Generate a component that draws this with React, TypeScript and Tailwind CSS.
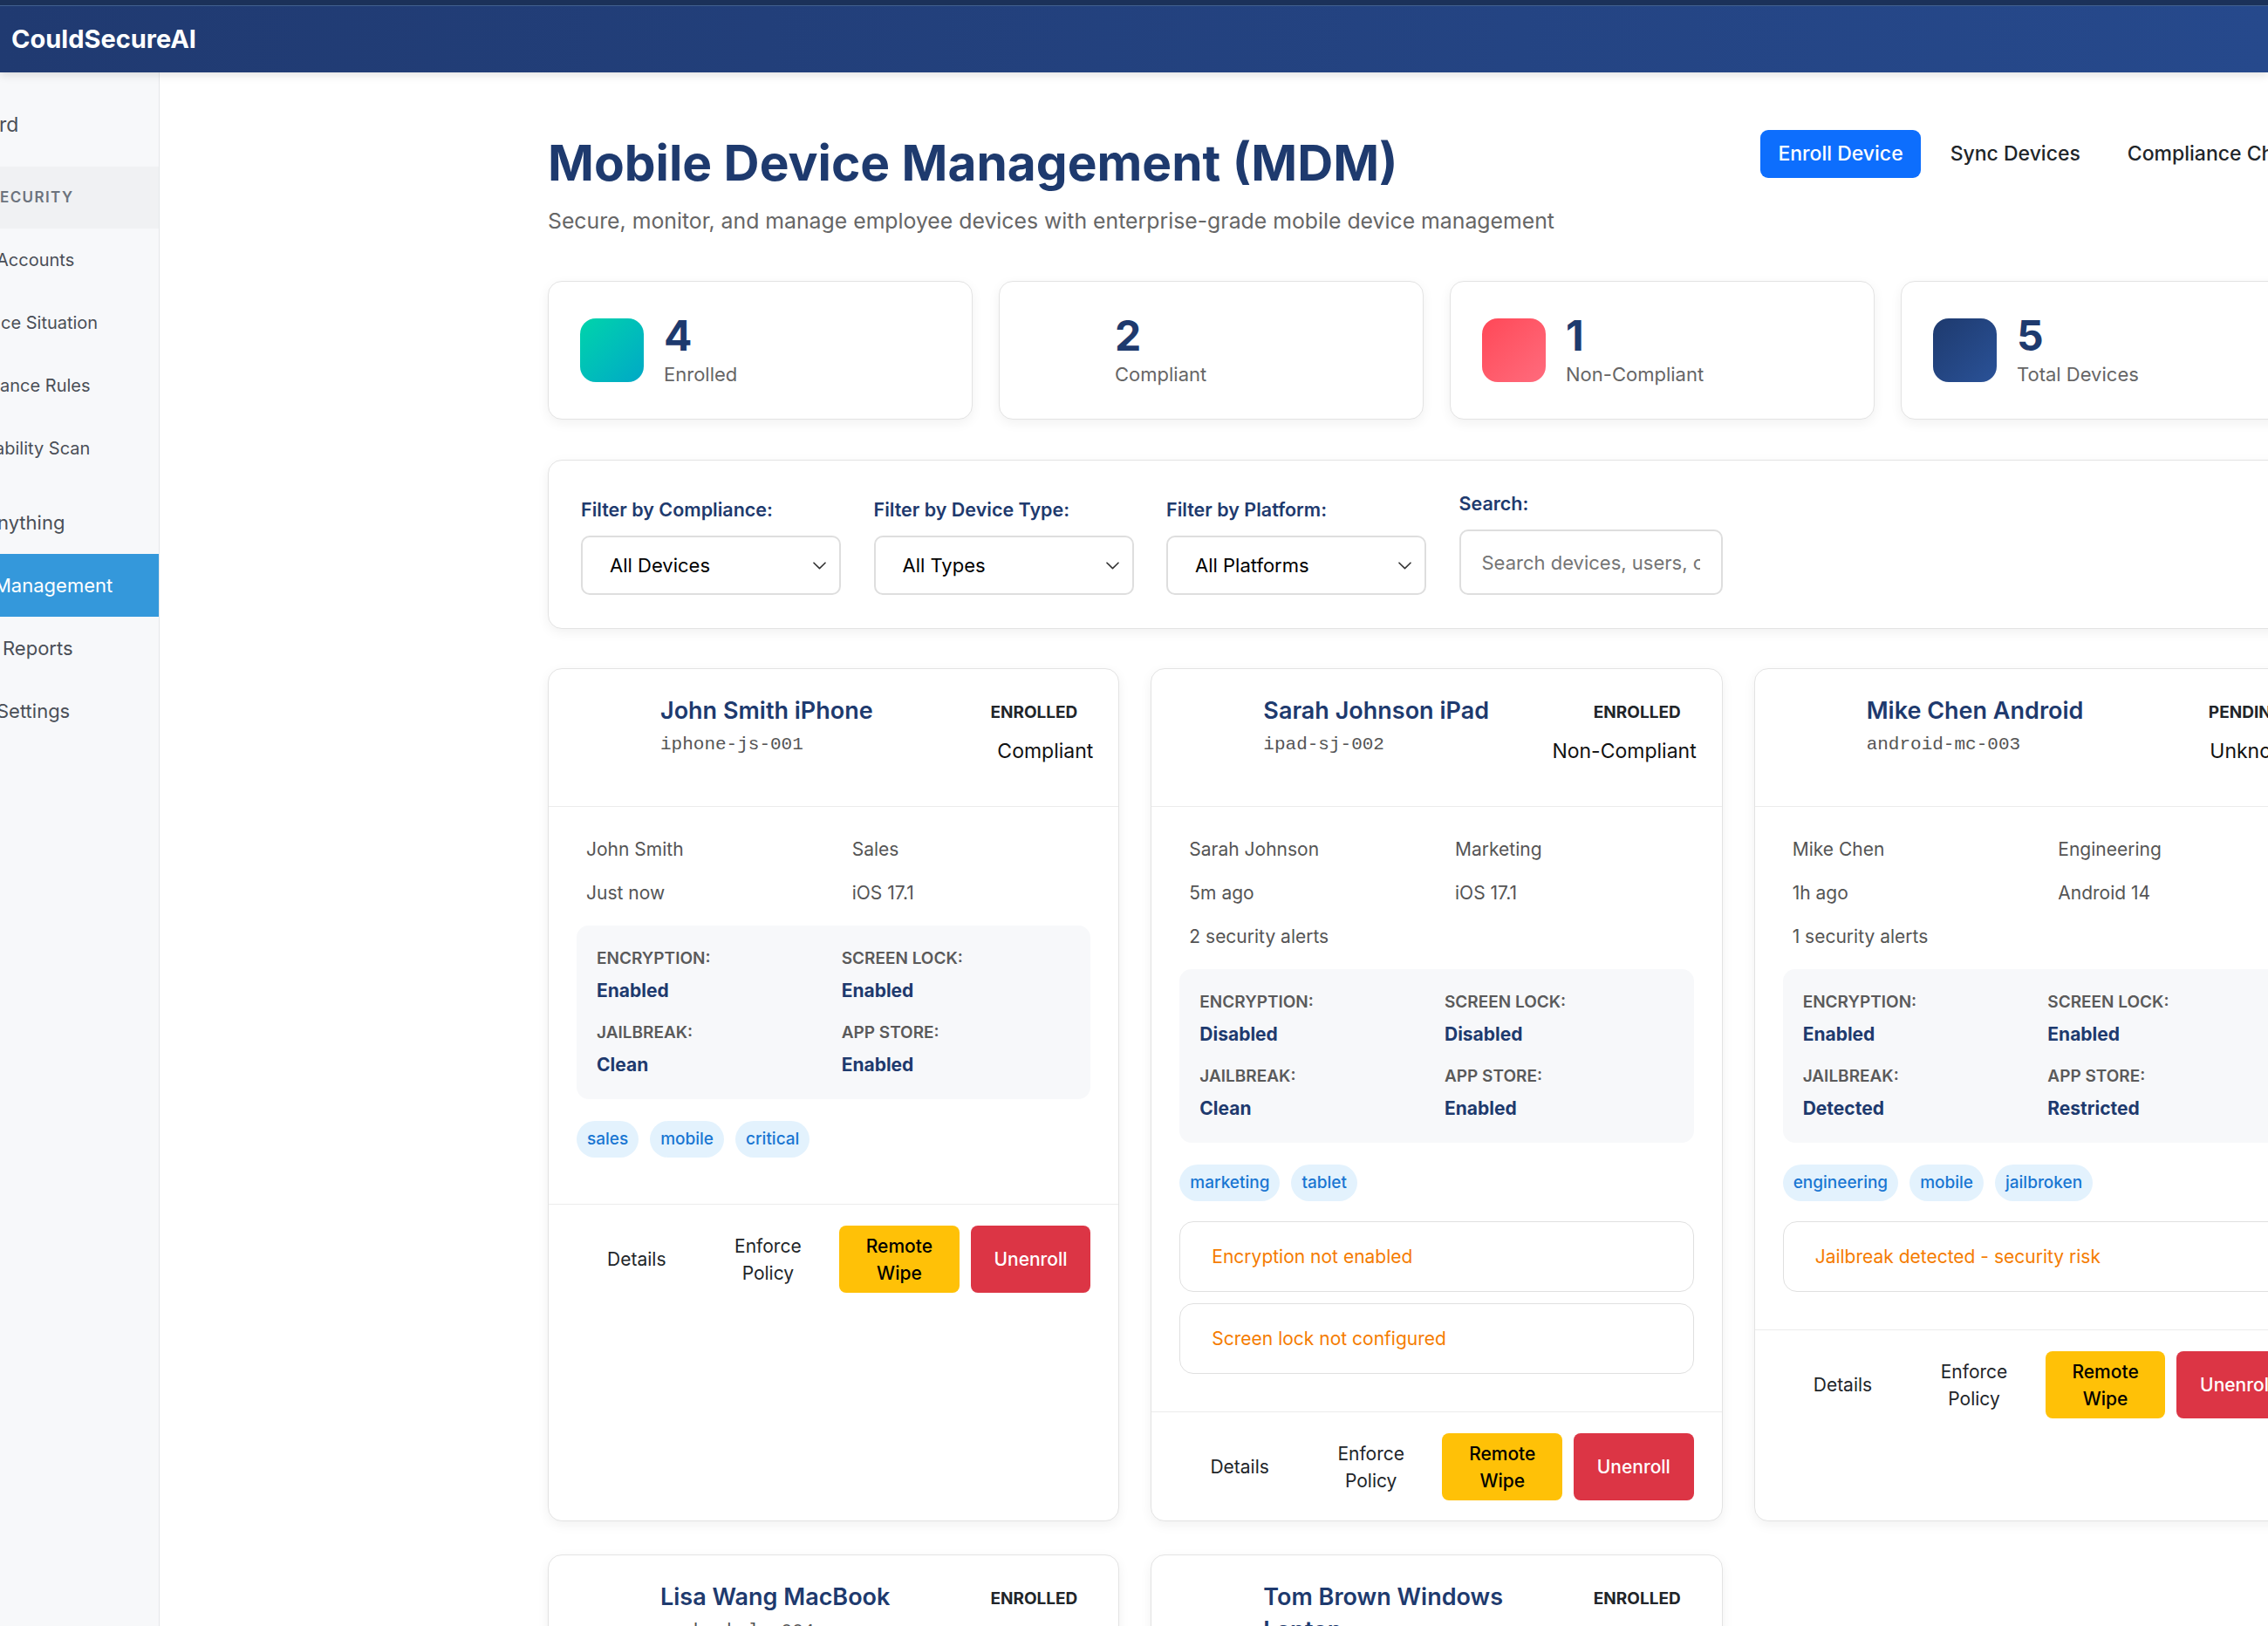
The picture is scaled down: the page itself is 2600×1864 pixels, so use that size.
import React from "react";

type Device = {
  name: string;
  id: string;
  status: string;
  compliance: string;
  user: string;
  dept: string;
  seen: string;
  os: string;
  alerts: number;
  enc: string;
  lock: string;
  jb: string;
  app: string;
  tags: string[];
  issues: string[];
};

const devices: Device[] = [
  {
    name: "John Smith iPhone",
    id: "iphone-js-001",
    status: "ENROLLED",
    compliance: "Compliant",
    user: "John Smith",
    dept: "Sales",
    seen: "Just now",
    os: "iOS 17.1",
    alerts: 0,
    enc: "Enabled",
    lock: "Enabled",
    jb: "Clean",
    app: "Enabled",
    tags: ["sales", "mobile", "critical"],
    issues: [],
  },
  {
    name: "Sarah Johnson iPad",
    id: "ipad-sj-002",
    status: "ENROLLED",
    compliance: "Non-Compliant",
    user: "Sarah Johnson",
    dept: "Marketing",
    seen: "5m ago",
    os: "iOS 17.1",
    alerts: 2,
    enc: "Disabled",
    lock: "Disabled",
    jb: "Clean",
    app: "Enabled",
    tags: ["marketing", "tablet"],
    issues: ["Encryption not enabled", "Screen lock not configured"],
  },
  {
    name: "Mike Chen Android",
    id: "android-mc-003",
    status: "PENDING",
    compliance: "Unknown",
    user: "Mike Chen",
    dept: "Engineering",
    seen: "1h ago",
    os: "Android 14",
    alerts: 1,
    enc: "Enabled",
    lock: "Enabled",
    jb: "Detected",
    app: "Restricted",
    tags: ["engineering", "mobile", "jailbroken"],
    issues: ["Jailbreak detected - security risk"],
  },
  {
    name: "Lisa Wang MacBook",
    id: "macbook-lw-004",
    status: "ENROLLED",
    compliance: "Compliant",
    user: "Lisa Wang",
    dept: "Finance",
    seen: "2m ago",
    os: "macOS 14.2",
    alerts: 0,
    enc: "Enabled",
    lock: "Enabled",
    jb: "Clean",
    app: "Enabled",
    tags: ["finance", "laptop"],
    issues: [],
  },
  {
    name: "Tom Brown Windows Laptop",
    id: "laptop-tb-005",
    status: "ENROLLED",
    compliance: "Compliant",
    user: "Tom Brown",
    dept: "IT",
    seen: "10m ago",
    os: "Windows 11",
    alerts: 0,
    enc: "Enabled",
    lock: "Enabled",
    jb: "Clean",
    app: "Enabled",
    tags: ["it", "laptop"],
    issues: [],
  },
];

function Chevron() {
  return (
    <svg width="15" height="9" viewBox="0 0 15 9" fill="none">
      <path d="M1 1.2 L7.5 7.6 L14 1.2" stroke="#333" strokeWidth="1.6" strokeLinecap="round" strokeLinejoin="round" />
    </svg>
  );
}

function SelectBox({ label, value }: { label: string; value: string }) {
  return (
    <div className="flex flex-col">
      <div className="text-[21.5px] leading-[30px] font-semibold text-[#1e3a6e] mb-[15px]">{label}</div>
      <div className="w-[298px] h-[68px] border-2 border-[#dedede] rounded-[10px] bg-white pl-[31px] pr-[15px] flex items-center justify-between">
        <span className="text-[22px] text-black">{value}</span>
        <Chevron />
      </div>
    </div>
  );
}

function StatCard({ num, label, icon }: { num: string; label: string; icon: string }) {
  return (
    <div className="h-[159px] bg-white border border-[#e3e3e3] rounded-[16px] shadow-[0_4px_14px_rgba(0,0,0,0.06)] px-[36px] flex items-center gap-[23px]">
      <div className={`w-[73px] h-[73px] rounded-[18px] shrink-0 ${icon}`} />
      <div className="flex flex-col">
        <div className="text-[48px] leading-[50px] font-bold text-[#1e3a6e]">{num}</div>
        <div className="text-[22px] leading-[30px] text-[#666] mt-[4px]">{label}</div>
      </div>
    </div>
  );
}

function SecItem({ label, value }: { label: string; value: string }) {
  return (
    <div className="flex flex-col">
      <div className="text-[19px] leading-[26px] font-semibold text-[#5a5a5a] uppercase">{label}</div>
      <div className="text-[21px] leading-[30px] font-bold text-[#1e3a6e] mt-[9px]">{value}</div>
    </div>
  );
}

function DeviceCard({ d }: { d: Device }) {
  return (
    <div className="bg-white border border-[#e3e3e3] rounded-[16px] shadow-[0_4px_14px_rgba(0,0,0,0.06)]">
      <div className="px-[29px] pt-[29px] pb-[28px] flex items-start gap-[16px] border-b border-[#ececec]">
        <div className="w-[83px] h-[100px] shrink-0" aria-hidden="true" />
        <div className="flex-1 min-w-0">
          <div className="text-[27px] leading-[38px] font-semibold text-[#1e3a6e]">{d.name}</div>
          <div className="mt-[6px] text-[21px] leading-[28px] text-[#555] font-['Liberation_Mono',monospace]">{d.id}</div>
        </div>
        <div className="flex flex-col items-end shrink-0">
          <div className="px-[18px] py-[8px] text-[19px] leading-[26px] font-bold text-[#212529]">{d.status}</div>
          <div className="mt-[6px] text-[23px] leading-[34px] text-[#111]">{d.compliance}</div>
        </div>
      </div>
      <div className="px-[32px] pt-[24px] pb-[30px]">
        <div className="grid grid-cols-2 gap-x-[20px]">
          <div className="h-[50px] px-[11px] flex items-center text-[21px] text-[#555]">{d.user}</div>
          <div className="h-[50px] px-[11px] flex items-center text-[21px] text-[#555]">{d.dept}</div>
          <div className="h-[50px] px-[11px] flex items-center text-[21px] text-[#555]">{d.seen}</div>
          <div className="h-[50px] px-[11px] flex items-center text-[21px] text-[#555]">{d.os}</div>
          {d.alerts > 0 && (
            <div className="h-[50px] px-[11px] flex items-center text-[21px] text-[#555]">{`${d.alerts} security alerts`}</div>
          )}
        </div>
        <div className="mt-[12px] bg-[#f7f8fa] rounded-[14px] px-[23px] pt-[25px] pb-[24px] grid grid-cols-2 gap-x-[18px] gap-y-[20px]">
          <SecItem label="Encryption:" value={d.enc} />
          <SecItem label="Screen Lock:" value={d.lock} />
          <SecItem label="Jailbreak:" value={d.jb} />
          <SecItem label="App Store:" value={d.app} />
        </div>
        <div className="mt-[25px] mb-[23px] flex gap-[13px]">
          {d.tags.map((t) => (
            <span key={t} className="h-[42px] px-[12px] rounded-full bg-[#e3f2fd] text-[#1976d2] text-[19px] font-medium flex items-center">
              {t}
            </span>
          ))}
        </div>
        {d.issues.length > 0 && (
          <div className="mt-[5px] flex flex-col">
            {d.issues.map((i) => (
              <div key={i} className="h-[81px] mb-[13px] border border-[#e0e0e0] rounded-[16px] bg-white pl-[36px] flex items-center text-[21px] text-[#f57c00]">
                {i}
              </div>
            ))}
          </div>
        )}
      </div>
      <div className="border-t border-[#ececec] px-[32px] pt-[24px] pb-[23px] flex gap-[13px]">
        <button className="flex-1 h-[77px] rounded-[8px] px-[10px] flex items-center justify-center text-center text-[21px] leading-[31px] text-[#212529]">
          Details
        </button>
        <button className="flex-1 h-[77px] rounded-[8px] px-[10px] flex items-center justify-center text-center text-[21px] leading-[31px] text-[#212529]">
          Enforce Policy
        </button>
        <button className="flex-1 h-[77px] rounded-[8px] px-[10px] flex items-center justify-center text-center text-[21px] leading-[31px] font-medium text-black bg-[#ffc107]">
          Remote Wipe
        </button>
        <button className="flex-1 h-[77px] rounded-[8px] px-[10px] flex items-center justify-center text-center text-[21px] leading-[31px] font-medium text-white bg-[#dc3545]">
          Unenroll
        </button>
      </div>
    </div>
  );
}

function NavItem({ text, ml, size, active }: { text: string; ml: string; size: string; active?: boolean }) {
  return (
    <div className={`h-[72px] flex items-center whitespace-nowrap ${active ? "bg-[#3498db] text-white" : "text-[#4a4f57]"}`}>
      <span className={`${ml} ${size}`}>{text}</span>
    </div>
  );
}

export default function App() {
  return (
    <div className="w-screen h-screen overflow-hidden flex flex-col bg-white font-['Inter',sans-serif]">
      <header className="relative z-10 h-[83px] shrink-0 flex flex-col shadow-[0_3px_10px_rgba(0,0,0,0.12)]">
        <div className="h-[6px] bg-[#1b3159]" />
        <div className="h-[1px] bg-[#41608f]" />
        <div className="flex-1 flex items-center pl-[13px] bg-gradient-to-r from-[#203a71] to-[#26498c]">
          <span className="text-white text-[29px] font-bold">CouldSecureAI</span>
        </div>
      </header>
      <div className="flex-1 flex min-h-0">
        <aside className="w-[183px] shrink-0 bg-[#f7f8fa] border-r border-[#e5e7ea] overflow-hidden pt-[24px]">
          <NavItem text="rd" ml="-ml-[1px]" size="text-[23px]" />
          <div className="mt-[12px] h-[71px] bg-[#f0f1f3] flex items-center whitespace-nowrap">
            <span className="text-[17px] font-semibold tracking-[1.4px] text-[#6c737d]">ECURITY</span>
          </div>
          <NavItem text="Accounts" ml="-ml-[4px]" size="text-[20px]" />
          <NavItem text="ce Situation" ml="ml-[1px]" size="text-[20px]" />
          <NavItem text="ance Rules" ml="ml-0" size="text-[20px]" />
          <NavItem text="ability Scan" ml="-ml-[6px]" size="text-[20px]" />
          <div className="h-[13px]" />
          <NavItem text="nything" ml="-ml-[3px]" size="text-[22px]" />
          <NavItem text="Management" ml="-ml-[7px]" size="text-[22px]" active />
          <NavItem text="Reports" ml="ml-[3px]" size="text-[22px]" />
          <NavItem text="Settings" ml="-ml-[4px]" size="text-[22px]" />
        </aside>
        <main className="flex-1 min-w-0 overflow-hidden pl-[445px] pt-[66px]">
          <div className="w-[2038px]">
            <div className="flex items-start justify-between">
              <div>
                <h1 className="mt-[4px] text-[56.8px] leading-[67px] font-bold text-[#1e3a6e]">Mobile Device Management (MDM)</h1>
                <p className="mt-[14px] text-[24.8px] leading-[39px] text-[#666]">
                  Secure, monitor, and manage employee devices with enterprise-grade mobile device management
                </p>
              </div>
              <div className="flex items-center gap-[14px]">
                <button className="h-[55px] px-[20px] rounded-[9px] bg-[#0d6efd] text-white text-[23px] font-medium">Enroll Device</button>
                <button className="h-[55px] px-[20px] rounded-[9px] text-[#212529] text-[23px] font-medium">Sync Devices</button>
                <button className="h-[55px] px-[20px] rounded-[9px] text-[#212529] text-[23px] font-medium whitespace-nowrap">Compliance Check</button>
              </div>
            </div>

            <div className="mt-[49px] grid grid-cols-4 gap-[30px]">
              <StatCard num="4" label="Enrolled" icon="bg-gradient-to-br from-[#00d4aa] to-[#00a8c6]" />
              <StatCard num="2" label="Compliant" icon="bg-transparent" />
              <StatCard num="1" label="Non-Compliant" icon="bg-gradient-to-br from-[#ff4757] to-[#ff6b7d]" />
              <StatCard num="5" label="Total Devices" icon="bg-gradient-to-br from-[#1e3a6e] to-[#2a5298]" />
            </div>

            <div className="mt-[46px] bg-white border border-[#e3e3e3] rounded-[16px] shadow-[0_4px_14px_rgba(0,0,0,0.06)] px-[37px] pt-[34px] pb-[38px] flex items-end gap-[37.5px]">
              <SelectBox label="Filter by Compliance:" value="All Devices" />
              <SelectBox label="Filter by Device Type:" value="All Types" />
              <SelectBox label="Filter by Platform:" value="All Platforms" />
              <div className="flex flex-col">
                <div className="text-[21.5px] leading-[30px] font-semibold text-[#1e3a6e] mb-[15px]">Search:</div>
                <input
                  className="w-[302px] h-[75px] border-2 border-[#dedede] rounded-[10px] bg-white px-[24px] text-[22px] placeholder:text-[#757575] outline-none"
                  placeholder="Search devices, users, or IDs..."
                />
              </div>
            </div>

            <div className="mt-[45px] grid grid-cols-3 gap-x-[36px] gap-y-[38px]">
              {devices.map((d) => (
                <DeviceCard key={d.id} d={d} />
              ))}
            </div>
          </div>
        </main>
      </div>
    </div>
  );
}
